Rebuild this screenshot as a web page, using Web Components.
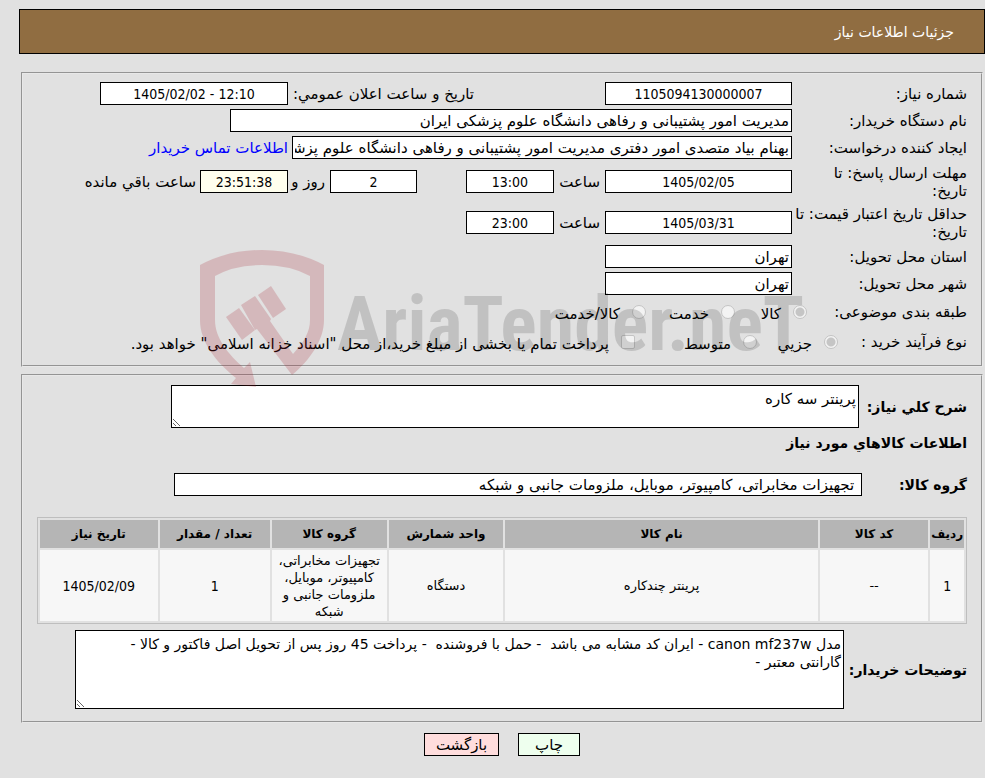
<!DOCTYPE html>
<html lang="fa" dir="rtl">
<head>
<meta charset="utf-8">
<title>جزئیات اطلاعات نیاز</title>
<style>
  body {
    margin: 0;
    background: #e1e1e1;
    color: #000;
    font: 15px/18px "DejaVu Sans", sans-serif;
    --number-font: 14px/18px "DejaVu Sans Condensed", "DejaVu Sans", sans-serif;
  }
</style>
</head>
<body>
<need-page></need-page>

<script>
// Label with a read-only text box; "multiline" gives a textarea
class TextField extends HTMLElement {
  constructor() {
    super();
    this.attachShadow({ mode: 'open' });
  }

  connectedCallback() {
    const label = this.getAttribute('label');
    const value = (this.getAttribute('value') || '').replace(/"/g, '&quot;');
    const name = this.getAttribute('name') || '';
    this.shadowRoot.innerHTML = `
      <style>
        :host {
          display: flex;
          align-items: center;
          min-width: 0;
        }
        label {
          box-sizing: border-box;
          flex: none;
          width: var(--label-width, auto);
          white-space: nowrap;
        }
        :host([strong]) label {
          font-weight: bold;
          font-size: 14px;
        }
        input, textarea {
          box-sizing: border-box;
          flex: 0 1 auto;
          min-width: 0;
          width: var(--box-width, 187px);
          margin: 0;
          padding: 0 2px;
          border: 1px solid #000;
          border-radius: 0;
          outline: 0;
          background: var(--box-color, #fff);
          color: #000;
          font: inherit;
        }
        input {
          height: 23px;
        }
        textarea {
          height: var(--box-height, 43px);
          padding: 4px 2px;
          overflow: hidden;
          font-size: var(--box-size, 15px);
        }
        :host([numeric]) input {
          direction: ltr;
          text-align: center;
          font: var(--number-font);
        }
      </style>
      ${label ? `<label for="box">${label}</label>` : ''}
      ${this.hasAttribute('multiline')
        ? `<textarea id="box" readonly>${value}</textarea>`
        : `<input id="box" type="text" readonly value="${value}" ${label ? '' : `aria-label="${name}"`}>`}
      <slot></slot>`;
  }
}

class OptionField extends HTMLElement {
  constructor() {
    super();
    this.attachShadow({ mode: 'open' });
  }

  connectedCallback() {
    const type = this.getAttribute('type') || 'radio';
    this.shadowRoot.innerHTML = `
      <style>
        :host {
          display: flex;
          align-items: center;
        }
        input {
          appearance: none;
          box-sizing: border-box;
          flex: none;
          width: 14px;
          height: 14px;
          margin: 0;
          border: 1px solid #c4c4c4;
          border-radius: 50%;
          background: #f3f3f3;
        }
        input:checked {
          background: radial-gradient(circle, #c5c5c5 4px, #f3f3f3 5px);
        }
        input[type="checkbox"] {
          border-radius: 2px;
        }
        label {
          padding-inline-start: 12px;
          padding-top: 4px;
          white-space: nowrap;
        }
      </style>
      <input id="option" type="${type}" disabled ${this.hasAttribute('checked') ? 'checked' : ''}>
      <label for="option"><slot></slot></label>`;
  }
}

class FormRow extends HTMLElement {
  constructor() {
    super();
    this.attachShadow({ mode: 'open' });
    this.shadowRoot.innerHTML = `
      <style>
        :host {
          display: flex;
          align-items: center;
          min-height: var(--row-height, 23px);
        }
      </style>
      <slot></slot>`;
  }
}

class FormPanel extends HTMLElement {
  constructor() {
    super();
    this.attachShadow({ mode: 'open' });
    this.shadowRoot.innerHTML = `
      <style>
        :host {
          display: flex;
          flex-direction: column;
          gap: 4px;
          position: relative;
          border: 2px groove #e8e8e8;
          padding: 8px 14px 10px;
        }
      </style>
      <slot></slot>`;
  }
}

class PageTitle extends HTMLElement {
  constructor() {
    super();
    this.attachShadow({ mode: 'open' });
    this.shadowRoot.innerHTML = `
      <style>
        :host {
          display: block;
          border: 1px solid #000;
          padding: 13px 30px 12px;
          background: #906d41;
          color: #fff;
        }
        h1 {
          margin: 0;
          font: inherit;
          font-size: 14px;
        }
      </style>
      <h1><slot></slot></h1>`;
  }
}

class GoodsTable extends HTMLElement {
  constructor() {
    super();
    this.attachShadow({ mode: 'open' });
    this.columns = [
      ['ردیف', 34],
      ['کد کالا', 110],
      ['نام کالا', 317],
      ['واحد شمارش', 116],
      ['گروه کالا', 116],
      ['تعداد / مقدار', 112],
      ['تاریخ نیاز', 119]
    ];
    this.rows = [
      ['1', '--', 'پرینتر چندکاره', 'دستگاه', 'تجهیزات مخابراتی، کامپیوتر، موبایل، ملزومات جانبی و شبکه', '1', '1405/02/09']
    ];
  }

  renderCell(cell) {
    return `<td${/^\d/.test(cell) ? ' class="number"' : ''}>${cell}</td>`;
  }

  connectedCallback() {
    const total = this.columns.reduce((sum, column) => sum + column[1], 0);
    this.shadowRoot.innerHTML = `
      <style>
        :host {
          display: block;
        }
        table {
          table-layout: fixed;
          width: 100%;
          border: 1px solid #bebebe;
          border-collapse: separate;
          border-spacing: 2px;
          font-size: 13px;
          line-height: 17px;
          text-align: center;
        }
        th {
          height: 28px;
          padding: 0;
          background: #b5b5b5;
          font-size: 12px;
          white-space: nowrap;
        }
        td {
          height: 71px;
          box-sizing: border-box;
          padding: 1px 4px;
          background: #f7f7f7;
        }
        .number {
          font: var(--number-font);
        }
      </style>
      <table>
        <colgroup>${this.columns.map(([, width]) => `<col style="width: ${Math.round(width / total * 1000) / 10}%">`).join('')}</colgroup>
        <thead><tr>${this.columns.map(([title]) => `<th>${title}</th>`).join('')}</tr></thead>
        <tbody>${this.rows.map(row => `<tr>${row.map(cell => this.renderCell(cell)).join('')}</tr>`).join('')}</tbody>
      </table>`;
  }
}

class ActionButton extends HTMLElement {
  constructor() {
    super();
    this.attachShadow({ mode: 'open' });
    this.shadowRoot.innerHTML = `
      <style>
        :host {
          display: block;
        }
        button {
          box-sizing: border-box;
          width: var(--button-width, 62px);
          height: 23px;
          padding: 0;
          border: 1px solid #000;
          background: var(--button-color, #efe);
          color: #000;
          font: inherit;
        }
      </style>
      <button type="button"><slot></slot></button>`;
  }
}

// Translucent site logo laid over the form
class SiteMark extends HTMLElement {
  constructor() {
    super();
    this.attachShadow({ mode: 'open' });
    this.shadowRoot.innerHTML = `
      <style>
        :host {
          display: flex;
          justify-content: center;
          direction: ltr;
          position: absolute;
          z-index: 1;
          top: 176px;
          left: 0;
          right: 0;
          gap: 12px;
          pointer-events: none;
        }
        svg {
          flex: none;
          fill: #a51928;
          opacity: .2;
        }
        span {
          padding-top: 32px;
          color: rgba(0, 0, 0, .14);
          font: bold 76px/84px "Roboto Condensed", "Liberation Sans Narrow", Roboto, sans-serif;
        }
      </style>
      <svg width="125" height="137" viewBox="0 0 125 137" aria-hidden="true">
        <path d="M0 15Q28 0 62 0T124 15V70C124 90 110 110 92 125L57 79 55 80 41 55 55 46 71 69 70 71 93 104C104 92 110 82 110 70V26Q90 15 62 15T15 26V70C15 88 28 104 44 118L50 112 56 137 31 134 36 128C16 112 0 92 0 70Z"/>
        <path d="M26 67 39 58 55 80 42 90Z"/>
        <path d="M58 45 71 36 86 59 73 68Z"/>
      </svg>
      <span>AriaTender.neT</span>`;
  }
}

class NeedPage extends HTMLElement {
  constructor() {
    super();
    this.attachShadow({ mode: 'open' });
    this.shadowRoot.innerHTML = `
      <style>
        :host {
          display: block;
          padding: 9px 0 22px 19px;
        }
        main {
          display: flex;
          flex-direction: column;
          gap: 7px;
          margin: 18px 2px 10px;
        }
        a {
          color: #00f;
          text-decoration: none;
          white-space: nowrap;
          margin-inline-start: 4px;
        }
        .main {
          --label-width: 175px;
        }
        .full {
          --box-width: 562px;
        }
        .creator {
          --box-width: 500px;
        }
        .announce {
          --label-width: 186px;
          --box-width: 188px;
          margin-inline-start: 131px;
        }
        .tall {
          --row-height: 37px;
        }
        .hour {
          --label-width: 46px;
          --box-width: 88px;
          margin-inline-start: 5px;
        }
        .days {
          --box-width: 87px;
          margin-inline-start: 49px;
        }
        .clock {
          --label-width: 37px;
          --box-width: 88px;
          --box-color: #ffe;
          margin-inline-start: 5px;
        }
        .clock span {
          margin-inline-start: 4px;
          white-space: nowrap;
        }
        .options {
          --row-height: 26px;
        }
        .caption {
          flex: none;
          width: 160px;
        }
        .process .caption {
          width: 129px;
        }
        .options option-field {
          flex: none;
          width: var(--option-width);
        }
        .goods {
          gap: 0;
          padding-top: 9px;
          padding-bottom: 12px;
          --box-width: 688px;
        }
        .goods h2 {
          margin: 6px 0;
          font-size: 14px;
          line-height: 18px;
        }
        .group {
          --label-width: 105px;
          margin: 15px 0 21px;
        }
        .about {
          --label-width: 108px;
        }
        .note {
          --label-width: 123px;
          --box-width: 769px;
          --box-height: 79px;
          --box-size: 14px;
          margin-top: 6px;
        }
        footer {
          display: flex;
          justify-content: center;
          gap: 19px;
        }
        .back {
          --button-width: 75px;
          --button-color: #fdd;
        }
      </style>
      <page-title>جزئیات اطلاعات نیاز</page-title>
      <main>
        <form-panel>
          <form-row>
            <text-field class="main" numeric label="شماره نیاز:" value="1105094130000007"></text-field>
            <text-field class="announce" numeric label="تاریخ و ساعت اعلان عمومي:" value="1405/02/02 - 12:10"></text-field>
          </form-row>
          <form-row>
            <text-field class="main full" label="نام دستگاه خریدار:" value="مدیریت امور پشتیبانی و رفاهی دانشگاه علوم پزشکی ایران"></text-field>
          </form-row>
          <form-row>
            <text-field class="main creator" label="ایجاد کننده درخواست:" value="بهنام بیاد متصدی امور دفتری مدیریت امور پشتیبانی و رفاهی دانشگاه علوم پزشکی ایران"></text-field>
            <a href="#contact">اطلاعات تماس خریدار</a>
          </form-row>
          <form-row class="tall">
            <text-field class="main" numeric label="مهلت ارسال پاسخ: تا<br>تاریخ:" value="1405/02/05"></text-field>
            <text-field class="hour" numeric label="ساعت" value="13:00"></text-field>
            <text-field class="days" numeric name="روز" value="2"></text-field>
            <text-field class="clock" numeric label="روز و" value="23:51:38"><span>ساعت باقي مانده</span></text-field>
          </form-row>
          <form-row class="tall">
            <text-field class="main" numeric label="حداقل تاریخ اعتبار قیمت: تا<br>تاریخ:" value="1405/03/31"></text-field>
            <text-field class="hour" numeric label="ساعت" value="23:00"></text-field>
          </form-row>
          <form-row>
            <text-field class="main" label="استان محل تحویل:" value="تهران"></text-field>
          </form-row>
          <form-row>
            <text-field class="main" label="شهر محل تحویل:" value="تهران"></text-field>
          </form-row>
          <form-row class="options">
            <span class="caption">طبقه بندی موضوعی:</span>
            <option-field checked style="--option-width: 72px">کالا</option-field>
            <option-field style="--option-width: 89px">خدمت</option-field>
            <option-field style="--option-width: auto">کالا/خدمت</option-field>
          </form-row>
          <form-row class="options process">
            <span class="caption">نوع فرآیند خرید :</span>
            <option-field checked style="--option-width: 81px">جزيي</option-field>
            <option-field style="--option-width: 122px">متوسط</option-field>
            <option-field type="checkbox" style="--option-width: auto">پرداخت تمام یا بخشی از مبلغ خرید،از محل "اسناد خزانه اسلامی" خواهد بود.</option-field>
          </form-row>
          <site-mark></site-mark>
        </form-panel>
        <form-panel class="goods">
          <form-row>
            <text-field class="about" strong multiline label="شرح کلي نیاز:" value="پرینتر سه کاره"></text-field>
          </form-row>
          <h2>اطلاعات کالاهاي مورد نیاز</h2>
          <form-row class="group">
            <text-field strong label="گروه کالا:" value=" تجهیزات مخابراتی، کامپیوتر، موبایل، ملزومات جانبی و شبکه"></text-field>
          </form-row>
          <goods-table></goods-table>
          <form-row class="note">
            <text-field strong multiline label="توضیحات خریدار:" value="مدل canon mf237w - ایران کد مشابه می باشد  - حمل با فروشنده  - پرداخت 45 روز پس از تحویل اصل فاکتور و کالا -&#10;گارانتی معتبر -"></text-field>
          </form-row>
        </form-panel>
      </main>
      <footer>
        <action-button>چاپ</action-button>
        <action-button class="back">بازگشت</action-button>
      </footer>`;
  }
}

customElements.define('text-field', TextField);
customElements.define('option-field', OptionField);
customElements.define('form-row', FormRow);
customElements.define('form-panel', FormPanel);
customElements.define('page-title', PageTitle);
customElements.define('goods-table', GoodsTable);
customElements.define('action-button', ActionButton);
customElements.define('site-mark', SiteMark);
customElements.define('need-page', NeedPage);
</script>
</body>
</html>
